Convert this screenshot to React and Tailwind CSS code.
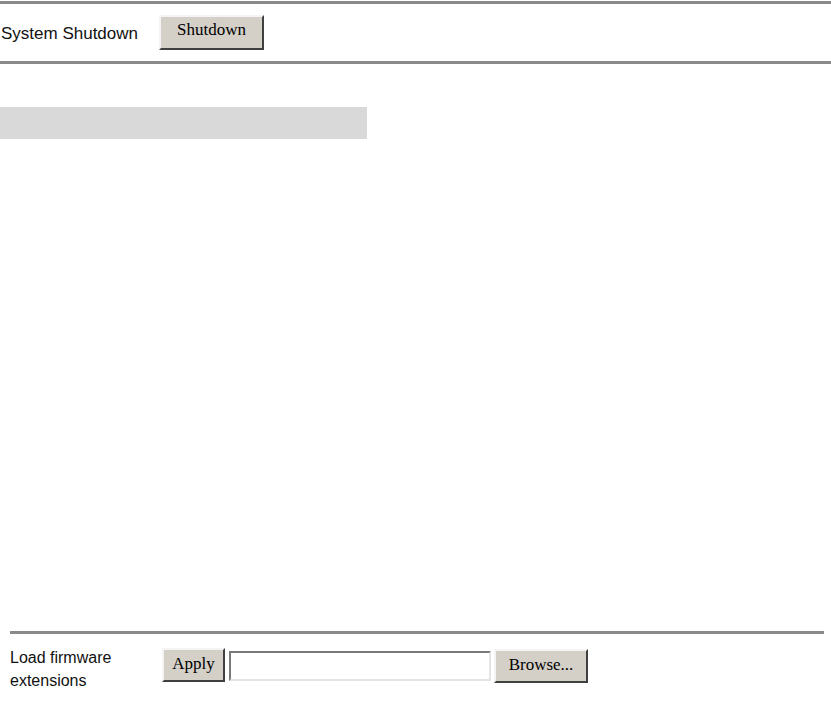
import React from "react";

const btn =
  "bg-[#d4d0c8] border-2 border-t-[#f4f4f4] border-l-[#f4f4f4] border-b-[#404040] border-r-[#404040] text-black flex items-center justify-center";

export default function App() {
  return (
    <div className="w-[831px] h-[703px] bg-white overflow-hidden flex flex-col" style={{ fontFamily: '"Liberation Sans", Arial, sans-serif' }}>
      <div className="mt-[1px] h-[3px] bg-[#8a8a8a]" />
      <div className="h-[57px] flex items-center">
        <span className="text-[17px] text-[#111] ml-[1px] mt-[3px]">System Shutdown</span>
        <div
          className={`${btn} ml-[21px] -mt-[1px] w-[105px] h-[35px] text-[17px]`}
          style={{ fontFamily: '"Liberation Serif", "Times New Roman", serif' }}
        >
          <span className="-mt-[4px]">Shutdown</span>
        </div>
      </div>
      <div className="h-[3px] bg-[#8a8a8a]" />
      <div className="mt-[43px] h-[32px] w-[367px] bg-[#d9d9d9]" />
      <div className="mt-[492px] ml-[10px] w-[814px] h-[3px] bg-[#8a8a8a]" />
      <div className="flex items-start mt-[14px] ml-[10px]">
        <div className="w-[152px] text-[16px] leading-[23px] text-[#111] -mt-[2px]">
          Load firmware
          <br />
          extensions
        </div>
        <div
          className={`${btn} w-[63px] h-[34px] text-[17px]`}
          style={{ fontFamily: '"Liberation Serif", "Times New Roman", serif' }}
        >
          <span className="-mt-[3px]">Apply</span>
        </div>
        <div className="ml-[4px] mt-[3px] w-[262px] h-[30px] bg-white border-2 border-t-[#7a7a7a] border-l-[#7a7a7a] border-b-[#e4e4e4] border-r-[#e4e4e4]" />
        <div
          className={`${btn} ml-[3px] mt-[1px] w-[94px] h-[34px] text-[17px]`}
          style={{ fontFamily: '"Liberation Serif", "Times New Roman", serif' }}
        >
          <span className="-mt-[2px]">Browse...</span>
        </div>
      </div>
    </div>
  );
}
